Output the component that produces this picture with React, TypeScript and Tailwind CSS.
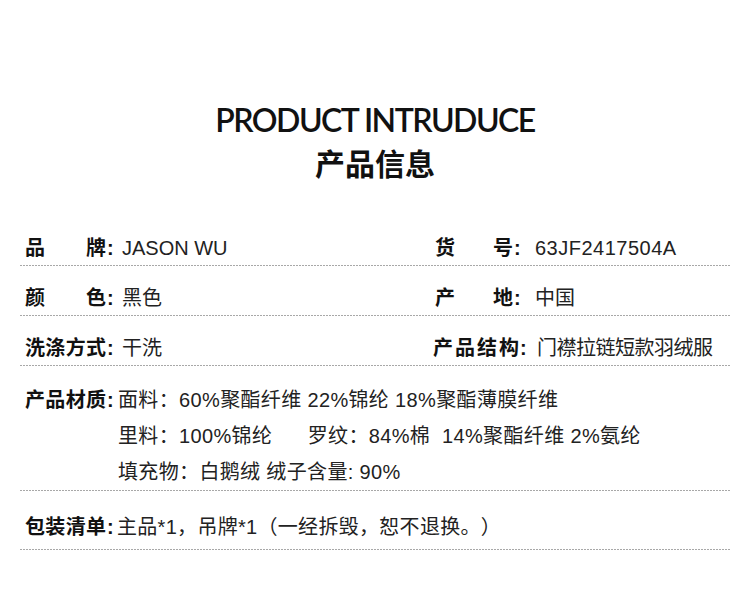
const sans = "font-['Liberation_Sans','Noto_Sans_CJK_SC',sans-serif]"

function Dashed() {
  return <div className="h-px w-full bg-[repeating-linear-gradient(to_right,#a8a8a8_0_2px,transparent_2px_3px)]" />
}

function Label({ chars, width }: { chars: string[]; width: string }) {
  return (
    <div className="flex items-center font-bold text-[20px] text-[#111]">
      <div className={`flex justify-between ${width}`}>
        {chars.map((c, i) => (
          <span key={i}>{c}</span>
        ))}
      </div>
      <span className="ml-[1px] w-[10px]">:</span>
    </div>
  )
}

function Cell({ chars, width, value, offset }: { chars: string[]; width: string; value: string; offset: string }) {
  return (
    <div className="flex items-center h-[30px]">
      <Label chars={chars} width={width} />
      <span className={`${offset} text-[20px] text-[#222]`}>{value}</span>
    </div>
  )
}

export default function App() {
  return (
    <div className={`w-[750px] h-[604px] bg-white ${sans} [text-spacing-trim:space-all]`}>
      <div className="pt-[100px] flex flex-col items-center">
        <h1 className="font-['Lato',sans-serif] font-semibold text-[32px] tracking-[-1.5px] leading-[40px] text-[#111]">
          PRODUCT INTRUDUCE
        </h1>
        <h2 className="font-bold text-[30px] leading-[50px] text-[#111]">产品信息</h2>
      </div>

      <div className="mx-[20px] mt-[26px]">
        <div className="pt-[17px] pb-[2px] grid grid-cols-[408px_1fr] pl-[5px]">
          <Cell chars={["品", "牌"]} width="w-[81px]" value="JASON WU" offset="ml-[5px]" />
          <div className="pl-[2px]">
            <Cell chars={["货", "号"]} width="w-[78px]" value="63JF2417504A" offset="ml-[11px] tracking-[0.5px]" />
          </div>
        </div>
        <Dashed />
        <div className="pt-[17px] pb-[2px] grid grid-cols-[408px_1fr] pl-[5px]">
          <Cell chars={["颜", "色"]} width="w-[81px]" value="黑色" offset="ml-[5px]" />
          <div className="pl-[2px]">
            <Cell chars={["产", "地"]} width="w-[78px]" value="中国" offset="ml-[11px]" />
          </div>
        </div>
        <Dashed />
        <div className="pt-[17px] pb-[2px] grid grid-cols-[408px_1fr] pl-[5px]">
          <Cell chars={["洗", "涤", "方", "式"]} width="w-[81px]" value="干洗" offset="ml-[5px]" />
          <div>
            <Cell chars={["产", "品", "结", "构"]} width="w-[86px]" value="门襟拉链短款羽绒服" offset="ml-[7px] tracking-[-0.5px]" />
          </div>
        </div>
        <Dashed />

        <div className="pt-[16px] pl-[5px] flex">
          <div className="h-[36px] flex items-center">
            <Label chars={["产", "品", "材", "质"]} width="w-[81px]" />
          </div>
          <div className="ml-[1px] text-[20px] leading-[36px] tracking-[0.35px] text-[#222] whitespace-pre">
            <div>面料：60%聚酯纤维 22%锦纶 18%聚酯薄膜纤维</div>
            <div>里料：100%锦纶      罗纹：84%棉  14%聚酯纤维 2%氨纶</div>
            <div>填充物：白鹅绒 绒子含量: 90%</div>
          </div>
        </div>
        <Dashed />

        <div className="pt-[21px] pb-[7px] pl-[5px]">
          <div className="flex items-center h-[30px]">
            <Label chars={["包", "装", "清", "单"]} width="w-[81px]" />
            <span className="text-[20px] tracking-[0.3px] text-[#222] whitespace-pre">主品*1，吊牌*1（一经拆毁，恕不退换。）</span>
          </div>
        </div>
        <Dashed />
      </div>
    </div>
  )
}
